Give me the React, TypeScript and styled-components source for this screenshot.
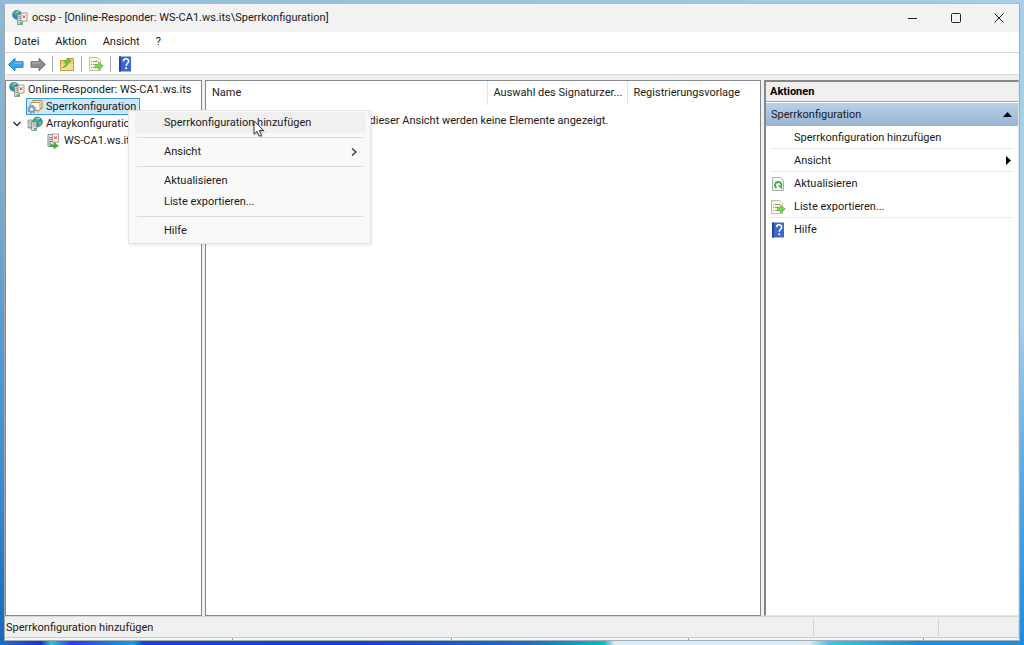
import React from "react";
import styled, { createGlobalStyle, css } from "styled-components";

const Global = createGlobalStyle`
  *, *::before, *::after { box-sizing: border-box; }
  body {
    margin: 0;
    font-family: Roboto, "Open Sans", sans-serif;
    font-size: 11px;
    line-height: 16px;
    color: #1a1a1a;
  }
  button { font: inherit; color: inherit; border: 0; padding: 0; margin: 0; background: none; text-align: left; }
  ul { list-style: none; margin: 0; padding: 0; }
`;

const Desktop = styled.div`
  min-height: 100vh;
  display: flex;
  padding: 3px 4px 4px;
  background:
    linear-gradient(90deg, #1d6fd0 0, #1238c8 4%, #35c0dc 5%, #2340e0 7%, #18a0dc 13%, #1447cc 14%, #1046cc 36%, #1474c8 52%, #12b4cc 59%, #dcecf8 60%, #dcecf8 79%, #38c4e8 81%, #1c8cdc 90%, #1c8ce4 100%) bottom / 100% 5px no-repeat,
    linear-gradient(#8fb9d4, #7fb0d2 25%, #5a9cd0 50%, #3c8cd0 75%, #1468b8) left / 4px 100% no-repeat,
    linear-gradient(#a6d0e8, #a6cfea 50%, #58a8e4 75%, #1c8ce0) right / 5px 100% no-repeat,
    linear-gradient(90deg, #90bbd6, #a5cfe6);
`;

const Window = styled.div`
  flex: 1;
  min-width: 0;
  display: flex;
  flex-direction: column;
  background: #f0f0f0;
  border: 1px solid #a4acb2;
  border-top-color: #b4bcc2;
`;

const TitleBar = styled.header`
  height: 28px;
  display: flex;
  align-items: center;
  gap: 4px;
  padding: 0 1px 1px 7px;
  background: #f3f3f3;
`;

const Title = styled.h1`
  flex: 1;
  margin: 0;
  font-size: 11px;
  font-weight: 400;
`;

const CaptionButton = styled.button`
  width: 39px;
  height: 27px;
  display: grid;
  place-items: center;
`;

const MenuBar = styled.nav`
  height: 21px;
  display: flex;
  align-items: center;
  gap: 16px;
  padding-left: 9px;
  background: #fff;
  border-bottom: 1px solid #d8d8dc;
`;

const ToolBar = styled.div`
  height: 22px;
  display: flex;
  align-items: center;
  gap: 6px;
  padding-left: 3px;
  background: #fff;
  border-bottom: 1px solid #dcdcdc;
`;

const ToolButton = styled.button`
  width: 16px;
  height: 16px;
  display: grid;
  place-items: center;
`;

const ToolDivider = styled.span`
  width: 1px;
  height: 16px;
  background: #a8a8a8;
`;

const Panes = styled.main`
  flex: 1;
  display: grid;
  grid-template-columns: minmax(0, 197fr) minmax(0, 556fr) minmax(0, 255fr);
  gap: 3px;
  padding-top: 5px;
`;

const Pane = styled.section`
  background: #fff;
  border: 1px solid #828790;
`;

const Tree = styled(Pane)`
  padding-left: 2px;
`;

const TreeRow = styled.div<{ $level: number }>`
  position: relative;
  height: 17px;
  display: flex;
  align-items: center;
  padding-left: ${(p) => p.$level * 18}px;
`;

const TreeLabel = styled.button<{ $selected?: boolean }>`
  height: 17px;
  display: flex;
  align-items: center;
  gap: 3px;
  padding: 0 3px 0 0;
  white-space: nowrap;
  border: 1px solid transparent;
  ${(p) =>
    p.$selected &&
    css`
      background: #cce8ff;
      border-color: #3c9ae0;
    `}
`;

const Expander = styled.button`
  width: 18px;
  margin-left: -18px;
  display: grid;
  place-items: center;
`;

const ContextMenu = styled.div`
  position: absolute;
  z-index: 2;
  left: 120px;
  top: 12px;
  width: 243px;
  padding: 1px 4px 2px 6px;
  background: #f9f9f9;
  border: 1px solid #e4e4e4;
  box-shadow: 1px 1px 3px #00000018;
`;

const MenuItem = styled.button<{ $active?: boolean }>`
  width: 100%;
  height: 21px;
  display: flex;
  align-items: center;
  justify-content: space-between;
  padding: 0 9px 0 29px;
  border-radius: 3px;
  background: ${(p) => (p.$active ? "#f0f0f0" : "transparent")};
`;

const MenuRule = styled.hr`
  height: 1px;
  margin: 4px 3px 3px 2px;
  border: 0;
  background: #dcdcdc;
`;

const Pointer = styled.svg`
  position: absolute;
  left: 124px;
  top: 9px;
`;

const List = styled.table`
  width: 100%;
  table-layout: fixed;
  border-collapse: collapse;
`;

const HeadCell = styled.th<{ $width?: string }>`
  width: ${(p) => p.$width ?? "auto"};
  height: 24px;
  padding: 0 5px 0 6px;
  font-weight: 400;
  text-align: left;
  white-space: nowrap;
  border-right: 1px solid #e4e4e4;
  &:last-child { border-right: 0; }
`;

const EmptyCell = styled.td`
  height: 32px;
  padding: 0;
  text-align: center;
`;

const Actions = styled.aside`
  background: #fff;
  border: solid;
  border-width: 2px 1px 1px 2px;
  border-color: #868686 #e4e4e4 #e4e4e4 #868686;
`;

const ActionsTitle = styled.h2`
  height: 20px;
  margin: 0 0 1px;
  padding: 1px 4px 0;
  font-size: 11px;
  line-height: 18px;
  font-weight: 700;
  color: #000;
  background: #f0f0f0;
  border-bottom: 1px solid #a8a8a8;
`;

const ActionsGroup = styled.button`
  width: 100%;
  height: 23px;
  display: flex;
  align-items: center;
  justify-content: space-between;
  padding: 0 6px 0 5px;
  background: linear-gradient(#b9d1ea, #99b4d1);
`;

const ActionItem = styled.li<{ $rule?: boolean }>`
  height: 23px;
  margin: 0 5px 0 4px;
  border-bottom: 1px solid ${(p) => (p.$rule ? "#ececec" : "transparent")};
`;

const ActionButton = styled.button`
  width: 100%;
  height: 23px;
  display: grid;
  grid-template-columns: 16px 1fr auto;
  align-items: center;
  gap: 8px;
  padding-right: 2px;
`;

const ActionIcon = styled.span`
  display: flex;
`;

const StatusBar = styled.footer`
  height: 21px;
  display: flex;
  border-top: 1px solid #d8d8d8;
`;

const StatusCell = styled.div<{ $width?: number }>`
  flex: ${(p) => (p.$width ? `0 0 ${p.$width}px` : "1")};
  margin: 1px 0;
  padding: 2px 1px 0;
  border-right: 1px solid #d4d4d4;
`;

const BottomEdge = styled.div`
  height: 3px;
  display: grid;
  grid-template-columns: 228fr 219fr 237fr 235fr 95fr;
  background: #f5f5f5;
  border-top: 1px solid #cccccc;
  span { border-right: 1px solid #a0a0a0; }
  span:last-child { border: 0; }
`;

const Globe = ({ x, y, r }: { x: number; y: number; r: number }) => (
  <g>
    <circle cx={x} cy={y} r={r} fill="#2f86cf" stroke="#4b7896" strokeWidth=".5" />
    <path
      d={`M${x - r * 0.8} ${y - r * 0.4}q${r * 0.6} ${-r * 0.7} ${r} ${-r * 0.3}q${r * 0.1} ${r * 0.7} ${-r * 0.5} ${r * 0.8}z`}
      fill="#4fbf48"
    />
    <path d={`M${x + r * 0.1} ${y + r * 0.1}l${r * 0.6} ${-r * 0.3}l${r * 0.1} ${r * 0.7}l${-r * 0.5} ${r * 0.3}z`} fill="#5cc552" />
    <path d={`M${x - r * 0.1} ${y - r * 0.6}l${r * 0.6} ${-r * 0.1}`} stroke="#c9edff" strokeWidth="1" />
  </g>
);

const Certificate = ({ x, y }: { x: number; y: number }) => (
  <g>
    <rect x={x} y={y} width="6" height="8" fill="#fbf8f1" stroke="#9b8577" strokeWidth=".8" />
    <path d={`M${x + 1.7} ${y + 2.3}l2.6 2.8m0-2.8l-2.6 2.8`} stroke="#d03a30" strokeWidth="1" />
  </g>
);

const ResponderIcon = () => (
  <svg width="16" height="16" viewBox="0 0 16 16" fill="none" aria-hidden="true">
    <Globe x={5} y={4.8} r={4.6} />
    <path d="M5.5 4.5h5v10h-5z" fill="#d9dde0" stroke="#7e878d" strokeWidth=".8" />
    <path d="M6.5 6.5h3M6.5 8.5h3M6.5 10.5h3" stroke="#858f96" strokeWidth=".8" />
    <path d="M7.500 12.3h2.7v2.3H7.500z" fill="#4ac33a" />
    <Certificate x={9} y={3} />
  </svg>
);

const RevocationIcon = () => (
  <svg width="16" height="15" viewBox="0 0 16 15" fill="none" aria-hidden="true">
    <path d="M6 1.500h9v8H6z" fill="#f9e7bd" stroke="#b48b4d" />
    <path d="M4 3.500h9v8H4z" fill="#fffaf0" stroke="#b99866" />
    <path d="M9 11l3 1-1 2z" fill="#dfa642" />
    <circle cx="4.700" cy="10.300" r="2.8" fill="#c7dceb" stroke="#7697ae" strokeWidth="1.5" />
    <circle cx="4.700" cy="10.300" r="4" stroke="#7d9bb2" strokeWidth="1.2" strokeDasharray="1.6 1.54" />
    <circle cx="4.700" cy="10.300" r="1" fill="#fff" />
  </svg>
);

const ArrayIcon = () => (
  <svg width="16" height="16" viewBox="0 0 16 16" fill="none" aria-hidden="true">
    <path d="M1 4h4v8H1z" fill="#dce1e4" stroke="#818b91" strokeWidth=".8" />
    <Globe x={10.5} y={6} r={5} />
    <path d="M4.5 6h5v8.500h-5z" fill="#dce1e4" stroke="#818b91" strokeWidth=".8" />
    <path d="M5.5 8h3M5.5 10h3M1.8 6h2M1.8 8h2" stroke="#848f95" strokeWidth=".8" />
    <path d="M2.3 10.5h2.3v1.7H2.3zM7 12h2.3v2H7z" fill="#4bc43b" />
  </svg>
);

const ServerIcon = () => (
  <svg width="16" height="16" viewBox="0 0 16 16" fill="none" aria-hidden="true">
    <path d="M3 1.500h7v12H3z" fill="#e3e5e6" stroke="#888e92" />
    <path d="M4 4.5h3M4 6.5h3M4 8.5h3" stroke="#7e888e" />
    <Certificate x={7.5} y={1} />
    <path d="M5 9.5c0 2 1.5 2.5 4 2.4V9.8l4.5 3-4.500 3v-2c-3 .1-4.700-1-4-4.300z" fill="#44b93c" stroke="#2e8a2a" strokeWidth=".5" />
  </svg>
);

const ArrowIcon = ({ forward }: { forward?: boolean }) => (
  <svg width="16" height="16" viewBox="0 0 16 16" aria-hidden="true">
    <path
      d={forward ? "M15.400 8.500L9 2.300v3.400H1v5.600h8v3.400z" : "M.600 8.500L7 2.300v3.400h8v5.600H7v3.400z"}
      fill={forward ? "#8d8d8d" : "#35a8ee"}
      stroke={forward ? "#717171" : "#237fb7"}
    />
    <path d={forward ? "M2 7h8" : "M6 7h8"} stroke={forward ? "#b2b2b2" : "#80d0fa"} />
  </svg>
);

const FolderUpIcon = () => (
  <svg width="16" height="16" viewBox="0 0 16 16" aria-hidden="true">
    <path d="M1.500 4.500H8l1-2h5.500v12h-13z" fill="#edcb72" stroke="#c69d45" />
    <path d="M2 8h12v6H2z" fill="#f7dc8f" />
    <path d="M3.500 11.500c2.500-1.500 3.500-3 3.500-5.500l-1.800.4L8.500 2l3.600 3.200-2.200.300c0 3-2.400 5.500-6.400 6z" fill="#6cc93e" stroke="#4b9c2c" strokeWidth=".6" />
  </svg>
);

const ExportIcon = () => (
  <svg width="16" height="16" viewBox="0 0 16 16" aria-hidden="true">
    <path d="M1.500 1.500h8l3 3v10h-11z" fill="#fbf8e6" stroke="#c4bda4" />
    <path d="M3 5.500h1m1 0h5M3 8.500h1m1 0h4M3 11.500h1m1 0h4" stroke="#96968c" />
    <path d="M7.500 8.300h3V6l4.700 4-4.700 4v-2.300h-3z" fill="#6fd84c" stroke="#52b038" strokeWidth=".6" />
  </svg>
);

const HelpIcon = () => (
  <svg width="16" height="16" viewBox="0 0 16 16" fill="none" aria-hidden="true">
    <path d="M2 .500h12v15H2z" fill="#3d67cf" />
    <path d="M2 .500h2v15H2z" fill="#23439d" />
    <path d="M6.500 5.200c0-3.300 5.200-3.200 5.200-.2 0 2.300-2.500 2.200-2.500 4.800" stroke="#fff" strokeWidth="1.6" />
    <path d="M8.300 11.300h1.800v1.800H8.300z" fill="#fff" />
  </svg>
);

const RefreshIcon = () => (
  <svg width="16" height="16" viewBox="0 0 16 16" fill="none" aria-hidden="true">
    <path d="M2.500 1.500h8l3 3v10h-11z" fill="#f7f8f5" stroke="#abb0aa" />
    <path d="M6.500 11.800C3.800 10.200 5 6 8.200 6c3.200 0 4.200 3 2.500 4.800" stroke="#41b43c" strokeWidth="1.8" />
    <path d="M8 9.500l4.200-.2-.2 4.200z" fill="#41b43c" />
  </svg>
);

const menus = ["Datei", "Aktion", "Ansicht", "?"];

const actions = [
  { label: "Sperrkonfiguration hinzufügen", rule: true },
  { label: "Ansicht", rule: true, submenu: true },
  { label: "Aktualisieren", icon: <RefreshIcon /> },
  { label: "Liste exportieren...", icon: <ExportIcon />, rule: true },
  { label: "Hilfe", icon: <HelpIcon /> },
];

export default function App() {
  return (
    <Desktop>
      <Global />
      <Window>
        <TitleBar>
          <ResponderIcon />
          <Title>ocsp - [Online-Responder: WS-CA1.ws.its\Sperrkonfiguration]</Title>
          <CaptionButton aria-label="Minimieren">
            <svg width="10" height="10" stroke="#222"><path d="M0 5.5h9" /></svg>
          </CaptionButton>
          <CaptionButton aria-label="Maximieren">
            <svg width="10" height="10" stroke="#222" fill="none"><rect x=".5" y=".5" width="9" height="9" rx="1" /></svg>
          </CaptionButton>
          <CaptionButton aria-label="Schließen">
            <svg width="10" height="10" stroke="#222"><path d="M.5.5l9 9m0-9l-9 9" /></svg>
          </CaptionButton>
        </TitleBar>
        <MenuBar>
          {menus.map((m) => <button key={m}>{m}</button>)}
        </MenuBar>
        <ToolBar>
          <ToolButton aria-label="Zurück"><ArrowIcon /></ToolButton>
          <ToolButton aria-label="Vorwärts"><ArrowIcon forward /></ToolButton>
          <ToolDivider />
          <ToolButton aria-label="Übergeordneter Ordner"><FolderUpIcon /></ToolButton>
          <ToolDivider />
          <ToolButton aria-label="Liste exportieren"><ExportIcon /></ToolButton>
          <ToolDivider />
          <ToolButton aria-label="Hilfe"><HelpIcon /></ToolButton>
        </ToolBar>
        <Panes>
          <Tree>
            <TreeRow $level={0}>
              <TreeLabel><ResponderIcon />Online-Responder: WS-CA1.ws.its</TreeLabel>
            </TreeRow>
            <TreeRow $level={1}>
              <TreeLabel $selected><RevocationIcon />Sperrkonfiguration</TreeLabel>
              <ContextMenu role="menu">
                <MenuItem role="menuitem" $active>Sperrkonfiguration hinzufügen</MenuItem>
                <MenuRule />
                <MenuItem role="menuitem">
                  Ansicht
                  <svg width="6" height="10" fill="none" stroke="#333" strokeWidth="1.3" aria-hidden="true"><path d="M1 1.500l4 3.500-4 3.500" /></svg>
                </MenuItem>
                <MenuRule />
                <MenuItem role="menuitem">Aktualisieren</MenuItem>
                <MenuItem role="menuitem">Liste exportieren...</MenuItem>
                <MenuRule />
                <MenuItem role="menuitem">Hilfe</MenuItem>
                <Pointer width="13" height="19" viewBox="0 0 13 19" aria-hidden="true">
                  <path d="M2.500 2v14l3-3 2.200 5 2.300-1-2.100-4.700h4.300z" fill="#00000030" />
                  <path d="M1 .800v13.500l3.100-2.900 2.100 4.800 2.300-1-2.100-4.700h4.200z" fill="#fff" stroke="#333" />
                </Pointer>
              </ContextMenu>
            </TreeRow>
            <TreeRow $level={1}>
              <Expander aria-label="Arraykonfiguration reduzieren">
                <svg width="8" height="6" fill="none" stroke="#333" strokeWidth="1.4"><path d="M.5 1L4 4.500 7.500 1" /></svg>
              </Expander>
              <TreeLabel><ArrayIcon />Arraykonfiguration</TreeLabel>
            </TreeRow>
            <TreeRow $level={2}>
              <TreeLabel><ServerIcon />WS-CA1.ws.its</TreeLabel>
            </TreeRow>
          </Tree>
          <Pane>
            <List>
              <thead>
                <tr>
                  <HeadCell>Name</HeadCell>
                  <HeadCell $width="140px">Auswahl des Signaturzer...</HeadCell>
                  <HeadCell $width="133px">Registrierungsvorlage</HeadCell>
                </tr>
              </thead>
              <tbody>
                <tr><EmptyCell colSpan={3}>In dieser Ansicht werden keine Elemente angezeigt.</EmptyCell></tr>
              </tbody>
            </List>
          </Pane>
          <Actions>
            <ActionsTitle>Aktionen</ActionsTitle>
            <ActionsGroup>
              Sperrkonfiguration
              <svg width="9" height="5" aria-hidden="true"><path d="M0 5L4.500 0 9 5z" /></svg>
            </ActionsGroup>
            <ul>
              {actions.map((a) => (
                <ActionItem key={a.label} $rule={a.rule}>
                  <ActionButton>
                    <ActionIcon>{a.icon}</ActionIcon>
                    <span>{a.label}</span>
                    {a.submenu && <svg width="5" height="9" aria-hidden="true"><path d="M0 0l5 4.500L0 9z" /></svg>}
                  </ActionButton>
                </ActionItem>
              ))}
            </ul>
          </Actions>
        </Panes>
        <StatusBar>
          <StatusCell>Sperrkonfiguration hinzufügen</StatusCell>
          <StatusCell $width={125} />
          <StatusCell $width={80} />
        </StatusBar>
        <BottomEdge><span /><span /><span /><span /><span /></BottomEdge>
      </Window>
    </Desktop>
  );
}
